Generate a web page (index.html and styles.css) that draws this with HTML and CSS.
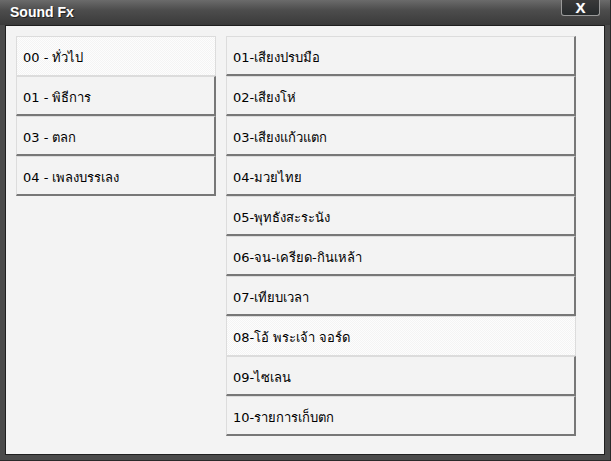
FILE: index.html
```html
<!DOCTYPE html>
<html lang="th">

<head>
    <meta charset="UTF-8">
    <meta name="viewport" content="width=device-width, initial-scale=1.0">
    <title>Sound Fx</title>
    <link rel="stylesheet" href="styles.css">
</head>

<body>
    <div class="window">
        <div class="titlebar">
            <span class="title">Sound Fx</span>
            <span class="close">X</span>
        </div>
        <div class="client">
            <div class="list groups">
                <div class="item active">00 - ทั่วไป</div>
                <div class="item">01 - พิธีการ</div>
                <div class="item">03 - ตลก</div>
                <div class="item">04 - เพลงบรรเลง</div>
            </div>
            <div class="list sounds">
                <div class="item">01-เสียงปรบมือ</div>
                <div class="item">02-เสียงโห่</div>
                <div class="item">03-เสียงแก้วแตก</div>
                <div class="item">04-มวยไทย</div>
                <div class="item">05-พุทธังสะระนัง</div>
                <div class="item">06-จน-เครียด-กินเหล้า</div>
                <div class="item">07-เทียบเวลา</div>
                <div class="item active">08-โอ้ พระเจ้า จอร์ด</div>
                <div class="item">09-ไซเลน</div>
                <div class="item">10-รายการเก็บตก</div>
            </div>
        </div>
    </div>
</body>

</html>
```

FILE: styles.css
```css
*,
::before,
::after {
    box-sizing: border-box;
    margin: 0;
    padding: 0;
}

body {
    background: #3c3c3c;
    font-family: Tahoma, "DejaVu Sans", "Noto Sans", sans-serif;
}

.window {
    width: 611px;
    height: 461px;
    display: flex;
    flex-direction: column;
    background: #4a4a4a;
    border-right: 1px solid #2a2a2a;
    border-bottom: 1px solid #2a2a2a;
}

.titlebar {
    height: 25px;
    display: flex;
    justify-content: space-between;
    align-items: flex-start;
    padding: 0 10px 0 10px;
    background: linear-gradient(#6b6b6b 0, #4d4d4d 40%, #3a3a3a 100%);
}

.title {
    margin-top: 4px;
    color: #fff;
    font-family: "Liberation Sans", sans-serif;
    font-weight: bold;
    font-size: 14px;
    text-shadow: 1px 1px 0 #222;
}

.close {
    width: 39px;
    height: 16px;
    border: 1px solid #9a9a9a;
    border-top: none;
    border-radius: 0 0 3px 3px;
    background: linear-gradient(#3a3a3a, #262a2c);
    color: #fff;
    font-family: "Liberation Sans", sans-serif;
    font-weight: bold;
    font-size: 15px;
    line-height: 15px;
    text-align: center;
    text-shadow: 0 0 1px #888;
}

.client {
    flex: 1;
    margin: 0 5px 5px 5px;
    border: 1px solid #1f1f1f;
    background: #f3f3f3;
    display: flex;
    align-items: flex-start;
    gap: 10px;
    padding: 10px 0 0 10px;
}

.groups {
    width: 200px;
}

.sounds {
    width: 350px;
}

.item {
    height: 40px;
    padding: 3px 0 0 6px;
    display: flex;
    align-items: center;
    font-size: 13px;
    color: #000;
    background: #f3f3f3;
    border-top: 1px solid #dcdcdc;
    border-left: 1px solid #dcdcdc;
    border-right: 2px solid #777;
    border-bottom: 2px solid #777;
}

.item.active {
    border: 1px solid #dcdcdc;
    background: repeating-conic-gradient(#fdfdfd 0 25%, #f4f4f4 0 50%) 0 0 / 2px 2px;
}
```
